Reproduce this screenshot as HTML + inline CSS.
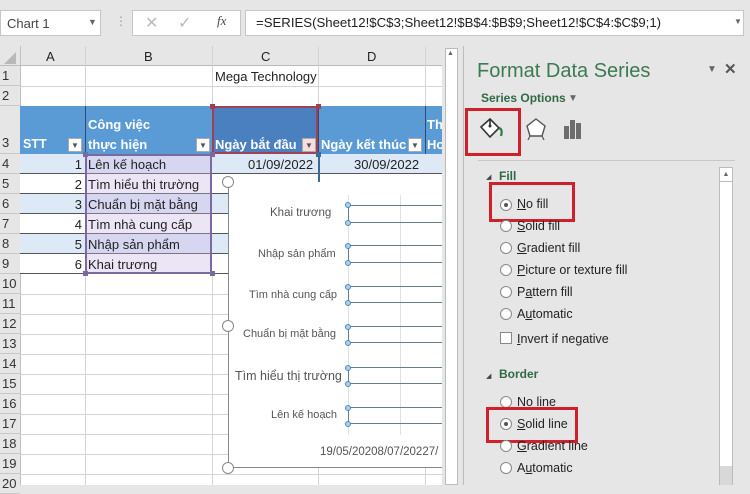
<!DOCTYPE html>
<html><head><meta charset="utf-8"><style>
*{box-sizing:border-box;margin:0;padding:0}
body{width:750px;height:485px;overflow:hidden;background:#e6e6e6;font-family:"Liberation Sans",sans-serif;position:relative}
.a{position:absolute}
.t{font-size:13px;color:#222;white-space:nowrap}
.rh{position:absolute;left:0;width:20px;font-size:13px;color:#333;text-align:left;padding-left:2px;background:#e6e6e6;border-bottom:1px solid #c8c8c8}
.hl{position:absolute;height:1px;background:#d4d4d4}
.vl{position:absolute;width:1px;background:#d4d4d4}
.radio{position:absolute;width:12px;height:12px;border:1px solid #888;border-radius:50%;background:#fff}
.radio.on::after{content:"";position:absolute;left:3px;top:3px;width:4px;height:4px;border-radius:50%;background:#555}
.opt{position:absolute;font-size:12.5px;color:#222}
.red{position:absolute;border:3px solid #d0202c}
.dot{position:absolute;width:6px;height:6px;border:1px solid #4a8ac4;border-radius:50%;background:#a9d0ee}
</style></head><body>
<!-- formula bar -->
<div class="a" style="left:0;top:10px;width:101px;height:26px;background:#fff;border:1px solid #c6c6c6"></div>
<div class="a t" style="left:7px;top:16px;font-size:13px;color:#444">Chart 1</div>
<div class="a" style="left:88px;top:17px;font-size:9px;color:#666">▼</div>
<div class="a" style="left:115px;top:14px;color:#999;font-size:12px">⋮</div>
<div class="a" style="left:132px;top:10px;width:109px;height:26px;background:#fff;border:1px solid #c6c6c6"></div>
<div class="a" style="left:145px;top:13px;color:#bbb;font-size:16px">✕</div>
<div class="a" style="left:178px;top:13px;color:#bbb;font-size:16px">✓</div>
<div class="a" style="left:217px;top:13px;color:#444;font-size:13px;font-style:italic;font-family:'Liberation Serif',serif">fx</div>
<div class="a" style="left:245px;top:10px;width:499px;height:26px;background:#fff;border:1px solid #c6c6c6"></div>
<div class="a t" style="left:256px;top:15px;font-size:13.2px;color:#222">=SERIES(Sheet12!$C$3;Sheet12!$B$4:$B$9;Sheet12!$C$4:$C$9;1)</div>
<div class="a" style="left:734px;top:17px;font-size:8px;color:#666">▼</div>

<!-- sheet -->
<div class="a" style="left:20px;top:66px;width:422px;height:419px;background:#fff"></div>
<!-- column headers -->
<div class="a" style="left:0;top:46px;width:442px;height:20px;background:#e6e6e6;border-bottom:1px solid #bbb"></div>
<div class="a" style="left:4px;top:52px;width:0;height:0;border-left:12px solid transparent;border-bottom:12px solid #b8b8b8"></div>
<div class="a t" style="left:46px;top:49px">A</div>
<div class="a t" style="left:144px;top:49px">B</div>
<div class="a t" style="left:261px;top:49px">C</div>
<div class="a t" style="left:367px;top:49px">D</div>
<div class="vl" style="left:20px;top:46px;height:439px;background:#c0c0c0"></div>
<div class="vl" style="left:85px;top:46px;height:439px"></div>
<div class="vl" style="left:212px;top:46px;height:439px"></div>
<div class="vl" style="left:318px;top:46px;height:439px"></div>
<div class="vl" style="left:425px;top:46px;height:439px"></div>
<!-- row lines -->
<div class="hl" style="left:20px;top:86px;width:422px"></div>
<div class="hl" style="left:20px;top:106px;width:422px"></div>
<div class="hl" style="left:20px;top:294px;width:422px"></div>
<div class="hl" style="left:20px;top:314px;width:422px"></div>
<div class="hl" style="left:20px;top:334px;width:422px"></div>
<div class="hl" style="left:20px;top:354px;width:422px"></div>
<div class="hl" style="left:20px;top:374px;width:422px"></div>
<div class="hl" style="left:20px;top:394px;width:422px"></div>
<div class="hl" style="left:20px;top:414px;width:422px"></div>
<div class="hl" style="left:20px;top:434px;width:422px"></div>
<div class="hl" style="left:20px;top:454px;width:422px"></div>
<div class="hl" style="left:20px;top:474px;width:422px"></div>
<!-- row headers -->
<div class="rh" style="top:66px;height:20px;line-height:20px">1</div>
<div class="rh" style="top:86px;height:20px;line-height:20px">2</div>
<div class="rh" style="top:106px;height:48px;line-height:74px">3</div>
<div class="rh" style="top:154px;height:20px;line-height:20px">4</div>
<div class="rh" style="top:174px;height:20px;line-height:20px">5</div>
<div class="rh" style="top:194px;height:20px;line-height:20px">6</div>
<div class="rh" style="top:214px;height:20px;line-height:20px">7</div>
<div class="rh" style="top:234px;height:20px;line-height:20px">8</div>
<div class="rh" style="top:254px;height:20px;line-height:20px">9</div>
<div class="rh" style="top:274px;height:20px;line-height:20px">10</div>
<div class="rh" style="top:294px;height:20px;line-height:20px">11</div>
<div class="rh" style="top:314px;height:20px;line-height:20px">12</div>
<div class="rh" style="top:334px;height:20px;line-height:20px">13</div>
<div class="rh" style="top:354px;height:20px;line-height:20px">14</div>
<div class="rh" style="top:374px;height:20px;line-height:20px">15</div>
<div class="rh" style="top:394px;height:20px;line-height:20px">16</div>
<div class="rh" style="top:414px;height:20px;line-height:20px">17</div>
<div class="rh" style="top:434px;height:20px;line-height:20px">18</div>
<div class="rh" style="top:454px;height:20px;line-height:20px">19</div>
<div class="rh" style="top:474px;height:20px;line-height:20px">20</div>
<div class="a t" style="left:215px;top:69px">Mega Technology</div>
<!-- table header -->
<div class="a" style="left:20px;top:106px;width:422px;height:48px;background:#5b9bd5"></div>
<div class="a" style="left:212px;top:106px;width:106px;height:48px;background:#4a7fc0;border:2px solid #a04050"></div>
<div class="vl" style="left:85px;top:106px;height:48px;background:#2d4a78"></div>
<div class="vl" style="left:318px;top:106px;height:48px;background:#2d4a78"></div>
<div class="vl" style="left:425px;top:106px;height:48px;background:#2d4a78"></div>
<div class="a t" style="left:23px;top:137px;color:#fff;font-weight:bold;font-size:12.5px">STT</div>
<div class="a t" style="left:88px;top:117px;color:#fff;font-weight:bold;font-size:13px">Công việc</div>
<div class="a t" style="left:88px;top:137px;color:#fff;font-weight:bold;font-size:13px">thực hiện</div>
<div class="a t" style="left:215px;top:137px;color:#fff;font-weight:bold;font-size:13px">Ngày bắt đầu</div>
<div class="a t" style="left:321px;top:137px;color:#fff;font-weight:bold;font-size:13px">Ngày kết thúc</div>
<div class="a t" style="left:427px;top:117px;color:#fff;font-weight:bold;font-size:13px">Th</div>
<div class="a t" style="left:427px;top:137px;color:#fff;font-weight:bold;font-size:13px">Hc</div>
<div class="a" style="left:68px;top:138px;width:14px;height:14px;background:#fff;border:1px solid #aaa;font-size:8px;color:#555;text-align:center;line-height:13px">▼</div>
<div class="a" style="left:196px;top:138px;width:14px;height:14px;background:#fff;border:1px solid #aaa;font-size:8px;color:#555;text-align:center;line-height:13px">▼</div>
<div class="a" style="left:302px;top:138px;width:14px;height:14px;background:#f4dede;border:1px solid #aaa;font-size:8px;color:#555;text-align:center;line-height:13px">▼</div>
<div class="a" style="left:408px;top:138px;width:14px;height:14px;background:#fff;border:1px solid #aaa;font-size:8px;color:#555;text-align:center;line-height:13px">▼</div>
<!-- data rows -->
<div class="a" style="left:20px;top:154px;width:422px;height:20px;background:#dde9f6;border-bottom:1px solid #555"></div>
<div class="a" style="left:20px;top:174px;width:422px;height:20px;background:#fff;border-bottom:1px solid #555"></div>
<div class="a" style="left:20px;top:194px;width:422px;height:20px;background:#dde9f6;border-bottom:1px solid #555"></div>
<div class="a" style="left:20px;top:214px;width:422px;height:20px;background:#fff;border-bottom:1px solid #555"></div>
<div class="a" style="left:20px;top:234px;width:422px;height:20px;background:#dde9f6;border-bottom:1px solid #555"></div>
<div class="a" style="left:20px;top:254px;width:422px;height:20px;background:#fff;border-bottom:1px solid #555"></div>
<div class="a" style="left:85px;top:154px;width:127px;height:120px;background:rgba(200,180,230,0.35);border:2px solid #7a6aa0"></div>
<div class="a" style="left:83px;top:152px;width:5px;height:5px;background:#7a6aa0"></div>
<div class="a" style="left:210px;top:152px;width:5px;height:5px;background:#7a6aa0"></div>
<div class="a" style="left:83px;top:271px;width:5px;height:5px;background:#7a6aa0"></div>
<div class="a" style="left:210px;top:271px;width:5px;height:5px;background:#7a6aa0"></div>
<div class="a" style="left:210px;top:104px;width:5px;height:5px;background:#a04050"></div>
<div class="a" style="left:316px;top:104px;width:5px;height:5px;background:#a04050"></div>
<div class="a" style="left:316px;top:152px;width:5px;height:5px;background:#3a6a9a"></div>
<div class="a" style="left:318px;top:154px;width:2px;height:28px;background:#3a6a9a"></div>
<div class="a t" style="left:20px;top:157px;width:62px;text-align:right">1</div>
<div class="a t" style="left:20px;top:177px;width:62px;text-align:right">2</div>
<div class="a t" style="left:20px;top:197px;width:62px;text-align:right">3</div>
<div class="a t" style="left:20px;top:217px;width:62px;text-align:right">4</div>
<div class="a t" style="left:20px;top:237px;width:62px;text-align:right">5</div>
<div class="a t" style="left:20px;top:257px;width:62px;text-align:right">6</div>
<div class="a t" style="left:88px;top:157px">Lên kế hoạch</div>
<div class="a t" style="left:88px;top:177px">Tìm hiểu thị trường</div>
<div class="a t" style="left:88px;top:197px">Chuẩn bị mặt bằng</div>
<div class="a t" style="left:88px;top:217px">Tìm nhà cung cấp</div>
<div class="a t" style="left:88px;top:237px">Nhập sản phẩm</div>
<div class="a t" style="left:88px;top:257px">Khai trương</div>
<div class="a t" style="left:248px;top:157px">01/09/2022</div>
<div class="a t" style="left:354px;top:157px">30/09/2022</div>
<!-- chart -->
<div class="a" style="left:228px;top:182px;width:214px;height:286px;background:#fff;border-left:1px solid #888;border-bottom:1px solid #888"></div>
<div class="vl" style="left:348px;top:195px;height:240px;background:#e0e0e0"></div>
<div class="vl" style="left:400px;top:195px;height:240px;background:#e0e0e0"></div>
<div class="a" style="left:222px;top:176px;width:12px;height:12px;border:1.5px solid #888;border-radius:50%;background:#fff"></div>
<div class="a" style="left:222px;top:320px;width:12px;height:12px;border:1.5px solid #888;border-radius:50%;background:#fff"></div>
<div class="a" style="left:222px;top:462px;width:12px;height:12px;border:1.5px solid #888;border-radius:50%;background:#fff"></div>
<div class="a t" style="left:270px;top:207px;font-size:11.5px;color:#555">Khai trương</div>
<div class="a t" style="left:258px;top:248px;font-size:11px;color:#555">Nhập sản phẩm</div>
<div class="a t" style="left:249px;top:289px;font-size:11px;color:#555">Tìm nhà cung cấp</div>
<div class="a t" style="left:243px;top:328px;font-size:11px;color:#555">Chuẩn bị mặt bằng</div>
<div class="a t" style="left:235px;top:369px;font-size:12.5px;color:#555">Tìm hiểu thị trường</div>
<div class="a t" style="left:271px;top:409px;font-size:11px;color:#555">Lên kế hoạch</div>
<div class="a t" style="left:320px;top:446px;font-size:11.5px;color:#555">19/05/20208/07/20227/</div>
<!-- series lines -->
<div class="a" style="left:348px;top:205px;width:94px;height:18px;border-top:1px solid #6a7a8a;border-bottom:1px solid #6a7a8a;border-left:1px solid #6a7a8a"></div>
<div class="a" style="left:348px;top:245px;width:94px;height:18px;border-top:1px solid #6a7a8a;border-bottom:1px solid #6a7a8a;border-left:1px solid #6a7a8a"></div>
<div class="a" style="left:348px;top:286px;width:94px;height:17px;border-top:1px solid #6a7a8a;border-bottom:1px solid #6a7a8a;border-left:1px solid #6a7a8a"></div>
<div class="a" style="left:348px;top:326px;width:94px;height:17px;border-top:1px solid #6a7a8a;border-bottom:1px solid #6a7a8a;border-left:1px solid #6a7a8a"></div>
<div class="a" style="left:348px;top:367px;width:94px;height:17px;border-top:1px solid #6a7a8a;border-bottom:1px solid #6a7a8a;border-left:1px solid #6a7a8a"></div>
<div class="a" style="left:348px;top:407px;width:94px;height:17px;border-top:1px solid #6a7a8a;border-bottom:1px solid #6a7a8a;border-left:1px solid #6a7a8a"></div>
<div class="dot" style="left:345px;top:202px"></div><div class="dot" style="left:345px;top:220px"></div>
<div class="dot" style="left:345px;top:243px"></div><div class="dot" style="left:345px;top:260px"></div>
<div class="dot" style="left:345px;top:284px"></div><div class="dot" style="left:345px;top:300px"></div>
<div class="dot" style="left:345px;top:324px"></div><div class="dot" style="left:345px;top:340px"></div>
<div class="dot" style="left:345px;top:365px"></div><div class="dot" style="left:345px;top:381px"></div>
<div class="dot" style="left:345px;top:405px"></div><div class="dot" style="left:345px;top:421px"></div>
<!-- sheet scrollbar -->
<div class="a" style="left:442px;top:46px;width:18px;height:439px;background:#e6e6e6"></div>
<div class="a" style="left:445px;top:48px;width:13px;height:437px;background:#fff;border:1px solid #bbb"></div>
<div class="a" style="left:447px;top:50px;font-size:7px;color:#666">▲</div>
<!-- panel -->
<div class="a" style="left:463px;top:46px;width:1px;height:439px;background:#bdbdbd"></div>
<div class="a" style="left:477px;top:60px;font-size:20px;color:#3c7a52">Format Data Series</div>
<div class="a" style="left:707px;top:64px;font-size:10px;color:#666">▼</div>
<div class="a" style="left:724px;top:60px;font-size:15px;color:#555;font-weight:bold">✕</div>
<div class="a" style="left:481px;top:91px;font-size:12px;color:#2f6a44;font-weight:bold">Series Options</div>
<div class="a" style="left:568px;top:93px;font-size:10px;color:#666">▼</div>
<div class="red" style="left:465px;top:108px;width:56px;height:48px"></div>
<svg class="a" style="left:478px;top:114px" width="30" height="30" viewBox="0 0 30 30"><path d="M3 13 L12 5 L21 14 L12 23 Z" fill="#fff" stroke="#333" stroke-width="1.6"/><path d="M12 5 V12" stroke="#333" stroke-width="1.6"/><circle cx="12" cy="12" r="1.5" fill="#333"/><path d="M21 14 Q25 15 23 22" fill="none" stroke="#2f7d44" stroke-width="2.2"/></svg>
<svg class="a" style="left:524px;top:116px" width="24" height="26" viewBox="0 0 24 26"><path d="M12 3 L21 10 L18 20 L6 20 L3 10 Z" fill="#fff" stroke="#555" stroke-width="1.4"/><path d="M6 20 L4 24 M18 20 L20 24" stroke="#555" stroke-width="1.2"/></svg>
<svg class="a" style="left:562px;top:118px" width="24" height="22" viewBox="0 0 24 22"><rect x="2" y="8" width="5" height="13" fill="#6d6d6d"/><rect x="8" y="2" width="5" height="19" fill="#6d6d6d"/><rect x="14" y="5" width="5" height="16" fill="#6d6d6d"/></svg>
<div class="a" style="left:478px;top:160px;width:257px;height:1px;background:#c8c8c8"></div>
<!-- panel scrollbar -->
<div class="a" style="left:719px;top:167px;width:14px;height:318px;background:#fff;border:1px solid #bbb"></div>
<div class="a" style="left:720px;top:168px;width:12px;height:14px;border-bottom:1px solid #bbb;font-size:7px;color:#666;text-align:center;line-height:14px">▲</div>
<div class="a" style="left:720px;top:466px;width:12px;height:19px;background:#d8d8d8"></div>
<div class="a" style="left:486px;top:173px;font-size:7px;color:#444">◢</div>
<div class="a" style="left:499px;top:169px;font-size:12px;color:#2f6a44;font-weight:bold">Fill</div>
<div class="radio on" style="left:500px;top:199px"></div><div class="opt" style="left:517px;top:197px"><u>N</u>o fill</div>
<div class="red" style="left:489px;top:182px;width:86px;height:40px"></div>
<div class="radio" style="left:500px;top:220px"></div><div class="opt" style="left:517px;top:219px"><u>S</u>olid fill</div>
<div class="radio" style="left:500px;top:242px"></div><div class="opt" style="left:517px;top:241px"><u>G</u>radient fill</div>
<div class="radio" style="left:500px;top:264px"></div><div class="opt" style="left:517px;top:263px"><u>P</u>icture or texture fill</div>
<div class="radio" style="left:500px;top:286px"></div><div class="opt" style="left:517px;top:285px">P<u>a</u>ttern fill</div>
<div class="radio" style="left:500px;top:308px"></div><div class="opt" style="left:517px;top:307px">A<u>u</u>tomatic</div>
<div class="a" style="left:500px;top:332px;width:12px;height:12px;border:1px solid #888;background:#fff"></div><div class="opt" style="left:517px;top:332px"><u>I</u>nvert if negative</div>
<div class="a" style="left:486px;top:372px;font-size:7px;color:#444">◢</div>
<div class="a" style="left:499px;top:367px;font-size:12px;color:#2f6a44;font-weight:bold">Border</div>
<div class="radio" style="left:500px;top:396px"></div><div class="opt" style="left:517px;top:395px">No line</div>
<div class="radio on" style="left:500px;top:418px"></div><div class="opt" style="left:517px;top:417px"><u>S</u>olid line</div>
<div class="red" style="left:486px;top:407px;width:92px;height:36px"></div>
<div class="radio" style="left:500px;top:440px"></div><div class="opt" style="left:517px;top:439px"><u>G</u>radient line</div>
<div class="radio" style="left:500px;top:462px"></div><div class="opt" style="left:517px;top:461px">A<u>u</u>tomatic</div>
</body></html>
